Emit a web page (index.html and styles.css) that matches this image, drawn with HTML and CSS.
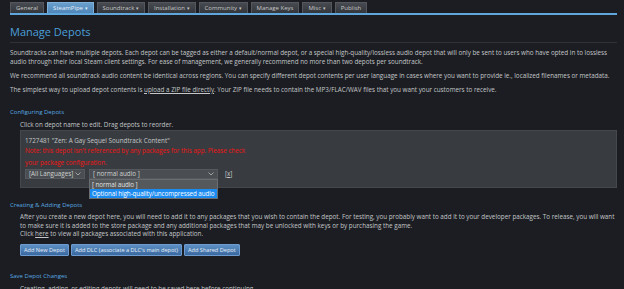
FILE: index.html
```html
<!DOCTYPE html>
<html>
<head>
<meta charset="utf-8">
<link rel="stylesheet" href="styles.css">
</head>
<body>
<div class="page">
  <div class="tabs">
    <div class="tab">General</div>
    <div class="tab active">SteamPipe <span class="caret">▾</span></div>
    <div class="tab">Soundtrack <span class="caret">▾</span></div>
    <div class="tab">Installation <span class="caret">▾</span></div>
    <div class="tab">Community <span class="caret">▾</span></div>
    <div class="tab">Manage Keys</div>
    <div class="tab">Misc <span class="caret">▾</span></div>
    <div class="tab">Publish</div>
  </div>
  <div class="bar"></div>

  <h1 class="title">Manage Depots</h1>

  <p class="text">Soundtracks can have multiple depots. Each depot can be tagged as either a default/normal depot, or a special high-quality/lossless audio depot that will only be sent to users who have opted in to lossless audio through their local Steam client settings. For ease of management, we generally recommend no more than two depots per soundtrack.</p>
  <p class="text">We recommend all soundtrack audio content be identical across regions. You can specify different depot contents per user language in cases where you want to provide ie., localized filenames or metadata.</p>
  <p class="text">The simplest way to upload depot contents is <u>upload a ZIP file directly</u>. Your ZIP file needs to contain the MP3/FLAC/WAV files that you want your customers to receive.</p>

  <h2 class="sub first">Configuring Depots</h2>
  <div class="indent">
    <p class="text">Click on depot name to edit. Drag depots to reorder.</p>
    <div class="depot">
      <div class="depot-name">1727481 "Zen: A Gay Sequel Soundtrack Content"</div>
      <div class="warn">Note: this depot isn't referenced by any packages for this app. Please check<br>your package configuration.</div>
      <div class="controls">
        <div class="select lang">[All Languages] <span class="chev"><svg width="6" height="4" viewBox="0 0 6 4"><path d="M0.5 0.5 L3 3 L5.5 0.5" fill="none" stroke="#b8b8b8" stroke-width="0.8"/></svg></span></div>
        <div class="select-wrap">
          <div class="select audio">[ normal audio ] <span class="chev"><svg width="6" height="4" viewBox="0 0 6 4"><path d="M0.5 0.5 L3 3 L5.5 0.5" fill="none" stroke="#b8b8b8" stroke-width="0.8"/></svg></span></div>
          <div class="menu">
            <div class="opt">[ normal audio ]</div>
            <div class="opt sel">Optional high-quality/uncompressed audio</div>
          </div>
        </div>
        <div class="del">[<u>x</u>]</div>
      </div>
    </div>
  </div>

  <h2 class="sub create">Creating &amp; Adding Depots</h2>
  <div class="indent">
    <p class="text tight">After you create a new depot here, you will need to add it to any packages that you wish to contain the depot. For testing, you probably want to add it to your developer packages. To release, you will want to make sure it is added to the store package and any additional packages that may be unlocked with keys or by purchasing the game.<br>Click <u>here</u> to view all packages associated with this application.</p>
    <div class="buttons">
      <div class="btn">Add New Depot</div>
      <div class="btn">Add DLC (associate a DLC's main depot)</div>
      <div class="btn">Add Shared Depot</div>
    </div>
  </div>

  <h2 class="sub save">Save Depot Changes</h2>
  <div class="indent">
    <p class="text">Creating, adding, or editing depots will need to be saved here before continuing.</p>
  </div>
</div>
</body>
</html>
```

FILE: styles.css
```css
* { box-sizing: border-box; }
html, body { margin: 0; padding: 0; background: #1b1d22; }
body {
  font-family: "Open Sans", "Noto Sans", sans-serif;
  color: #c4c6c8;
  overflow: hidden;
  height: 289px;
}
.page { padding: 2px 7px 0 10px; }
.tabs { display: flex; gap: 1px; height: 11px; }
.tab {
  height: 11px;
  line-height: 11px;
  padding: 0 5px;
  font-size: 6px;
  color: #c8c8c8;
  background: linear-gradient(#474b51, #33363b);
  border: 1px solid #54585e;
  border-bottom: none;
  white-space: nowrap;
  margin-right: 2px;
}
.tab.active { background: linear-gradient(#6a9fcc, #4f86b8); color: #e4eef7; border-color: #7fb0da; }
.caret { font-size: 5px; }
.bar { height: 2px; background: #5ea6dc; }
.title {
  margin: 10px 0 0 0;
  font-size: 11px;
  font-weight: 400;
  color: #4b9fda;
  line-height: 14px;
  padding-bottom: 3px;
  border-bottom: 1px solid #2f3338;
}
.text { margin: 5px 0 0 0; font-size: 6.3px; line-height: 9px; color: #c4c6c8; }
.text + .text { margin-top: 5px; }
.text.tight { line-height: 8.5px; }
.sub { font-size: 6px; font-weight: 400; color: #5aa8e0; margin: 14px 0 0 0; line-height: 9px; }
.indent { padding-left: 10px; }
.indent > .text { margin-top: 3px; }
.depot {
  margin-top: 1px;
  background: #383c40;
  border: 1px solid #44484c;
  padding: 5px 4px 5px 4px;
  height: 58px;
}
.depot-name { font-size: 6.3px; line-height: 9px; color: #c4c6c8; }
.warn { font-size: 6.3px; line-height: 12px; color: #f01414; }
.controls { display: flex; align-items: flex-start; gap: 4px; margin-top: 0px; }
.select {
  height: 10px;
  background: #4a4e52;
  border: 1px solid #55595d;
  font-size: 6.3px;
  line-height: 8px;
  padding: 0 3px;
  color: #d0d0d0;
  display: flex;
  justify-content: space-between;
  align-items: center;
}
.select.lang { width: 60px; }
.select.audio { width: 129px; }
.chev { display: flex; align-items: center; }
.select-wrap { position: relative; }
.menu {
  position: absolute;
  top: 10px;
  left: 0;
  width: 129px;
  border: 1px solid #6a6d70;
  background: #56595c;
  z-index: 2;
}
.opt { font-size: 6.3px; line-height: 9px; padding: 0 2px; color: #e0e0e0; white-space: nowrap; letter-spacing: -0.08px; }
.opt.sel { background: #1c8bf0; color: #ffffff; }
.del { font-size: 6.3px; line-height: 10px; margin-left: 3px; color: #c4c6c8; }
.buttons { display: flex; gap: 2px; margin-top: 5px; }
.btn {
  height: 12px;
  line-height: 10px;
  font-size: 5.6px;
  padding: 0 3px;
  color: #e6eef6;
  background: linear-gradient(#5c8fc4, #3a69a0);
  border: 1px solid #6d9bd0;
  border-radius: 1px;
  white-space: nowrap;
}
.sub.create { margin-top: 13px; }
.sub.save { margin-top: 16px; }
```
